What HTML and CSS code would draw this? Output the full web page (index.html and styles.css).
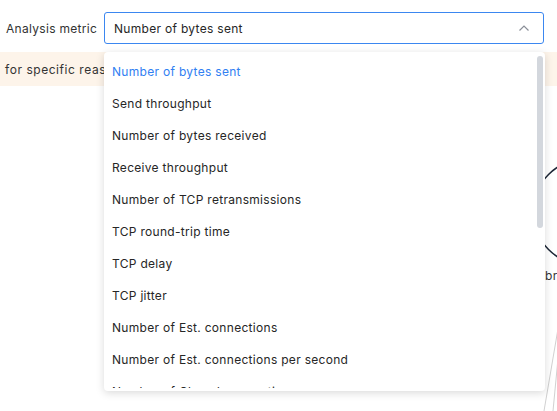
FILE: index.html
```html
<!DOCTYPE html>
<html>
<head>
<meta charset="utf-8">
<link rel="stylesheet" href="styles.css">
</head>
<body>
<div class="page">
  <div class="toolbar">
    <span class="label">Analysis metric</span>
    <div class="select">
      <span class="select-value">Number of bytes sent</span>
      <svg class="chevron" width="12" height="8" viewBox="0 0 12 8"><path d="M1.5 6.5 L6 2 L10.5 6.5" fill="none" stroke="#8a8f98" stroke-width="1.2"/></svg>
    </div>
  </div>
  <div class="notice">for specific reasons the analysis may be limited</div>
  <div class="canvas">
    <svg class="graph" width="557" height="411" viewBox="0 0 557 411">
      <circle cx="586" cy="212" r="53" fill="none" stroke="#1c2636" stroke-width="1.5"/>
      <line x1="560" y1="317" x2="544" y2="411" stroke="#c4c4c4" stroke-width="0.8"/>
      <line x1="559" y1="348" x2="553" y2="411" stroke="#c4c4c4" stroke-width="0.8"/>
      <text x="545" y="280" font-family="Inter, sans-serif" font-size="12" fill="#333">br</text>
    </svg>
  </div>
  <div class="dropdown">
    <ul class="options">
      <li class="option selected">Number of bytes sent</li>
      <li class="option">Send throughput</li>
      <li class="option">Number of bytes received</li>
      <li class="option">Receive throughput</li>
      <li class="option">Number of TCP retransmissions</li>
      <li class="option">TCP round-trip time</li>
      <li class="option">TCP delay</li>
      <li class="option">TCP jitter</li>
      <li class="option">Number of Est. connections</li>
      <li class="option">Number of Est. connections per second</li>
      <li class="option">Number of Closed connections</li>
    </ul>
    <div class="scrollbar"></div>
  </div>
</div>
</body>
</html>
```
FILE: styles.css
```css
html, body {
  margin: 0;
  padding: 0;
  background: #fff;
}
body {
  font-family: Inter, "Noto Sans", sans-serif;
  font-size: 12px;
  letter-spacing: 0.3px;
  color: #333;
  width: 557px;
  height: 411px;
  overflow: hidden;
}
.page {
  position: relative;
  width: 557px;
  height: 411px;
}
.toolbar {
  display: flex;
  align-items: center;
  padding: 12px 0 0 6px;
}
.label {
  width: 98px;
  flex: none;
  color: #333;
  white-space: nowrap;
}
.select {
  box-sizing: border-box;
  width: 440px;
  height: 32px;
  border: 1px solid #3b87f0;
  border-radius: 3px;
  display: flex;
  align-items: center;
  justify-content: space-between;
  padding: 0 13px 0 9px;
  background: #fff;
}
.select-value {
  color: #262626;
}
.chevron {
  display: block;
}
.notice {
  margin-top: 8px;
  height: 34px;
  background: #fdf4ea;
  display: flex;
  align-items: center;
  padding-left: 5px;
  letter-spacing: 0.55px;
  white-space: nowrap;
  overflow: hidden;
  color: #333;
}
.canvas {
  position: absolute;
  left: 0;
  top: 0;
  width: 557px;
  height: 411px;
  z-index: 0;
  pointer-events: none;
}
.graph {
  display: block;
}
.toolbar, .notice {
  position: relative;
  z-index: 1;
}
.dropdown {
  position: absolute;
  left: 104px;
  top: 52px;
  width: 441px;
  padding: 4px 0 3px;
  background: #fff;
  border-radius: 4px;
  box-shadow: 0 2px 8px rgba(0, 0, 0, 0.15);
  z-index: 5;
}
.options {
  list-style: none;
  margin: 0;
  padding: 0;
  height: 332px;
  overflow: hidden;
}
.option {
  height: 32px;
  line-height: 32px;
  padding-left: 8px;
  color: #262626;
  white-space: nowrap;
}
.option.selected {
  color: #3180f2;
}
.scrollbar {
  position: absolute;
  right: 2px;
  top: 4px;
  width: 6px;
  height: 172px;
  background: #d3d7dd;
  border-radius: 3px;
}
```
